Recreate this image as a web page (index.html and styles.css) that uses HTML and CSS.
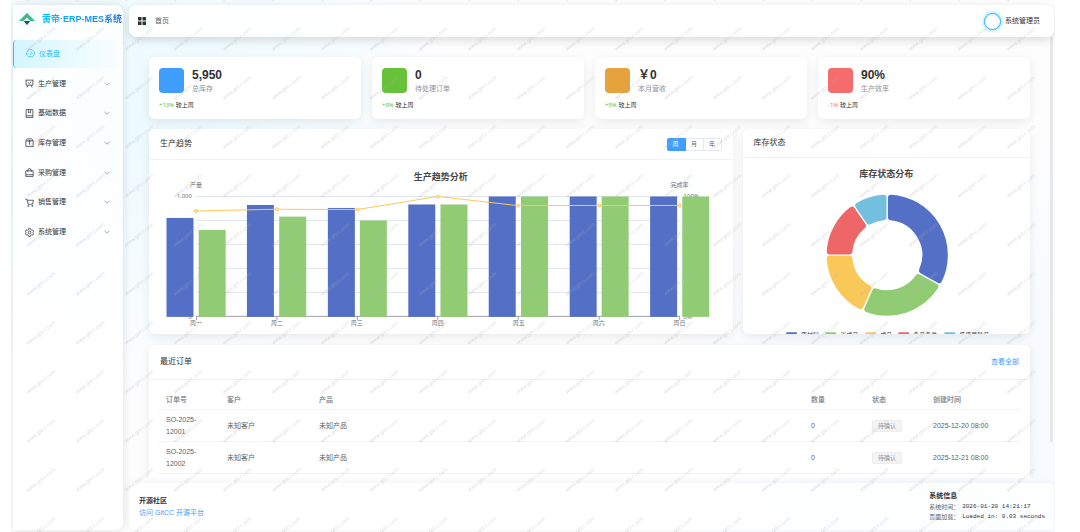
FILE: index.html
```html
<!DOCTYPE html>
<html lang="zh-CN">
<head>
  <meta charset="UTF-8">
  <meta name="viewport" content="width=device-width, initial-scale=1.0">
  <title>黄帝·ERP-MES系统</title>
  <link rel="stylesheet" href="styles.css">
</head>
<body>
  <div class="app">
    <aside class="sidebar">
      <div class="logo">
        <svg class="logo-icon" viewBox="0 0 16 12">
          <path d="M8 0L16 8H11.5L8 4.5L4.5 8H0Z" fill="#41b883"/>
          <path d="M4.8 8H11.2L8 12Z" fill="#35495e"/>
        </svg>
        <span>黄帝·ERP-MES系统</span>
      </div>
      <nav class="menu">
        <a class="menu-item active" href="#">
          <svg class="icon" viewBox="0 0 16 16"><path d="M4.5 13.8A7 7 0 1 1 11.5 13.8ZM8 10.5L10 5.5M3.5 8H4.5M5 4.8L5.6 5.4M12.5 8H11.5M8 3.3V4.3"/></svg>
          <span>仪表盘</span>
        </a>
        <a class="menu-item" href="#">
          <svg class="icon" viewBox="0 0 16 16"><path d="M1 2H15M2 2V11H14V2M5 11L3.5 15M11 11L12.5 15M5 6L7.5 8L11 5"/></svg>
          <span>生产管理</span>
          <svg class="arrow" viewBox="0 0 10 10"><path d="M1 3L5 7L9 3"/></svg>
        </a>
        <a class="menu-item" href="#">
          <svg class="icon" viewBox="0 0 16 16"><path d="M2 1H14V15H2ZM2 12H14M6 1V7L8 5.5L10 7V1"/></svg>
          <span>基础数据</span>
          <svg class="arrow" viewBox="0 0 10 10"><path d="M1 3L5 7L9 3"/></svg>
        </a>
        <a class="menu-item" href="#">
          <svg class="icon" viewBox="0 0 16 16"><path d="M1.5 5H14.5V15H1.5ZM1.5 5L4 1.5H12L14.5 5M8 12V4M5.5 6.5L8 4L10.5 6.5"/></svg>
          <span>库存管理</span>
          <svg class="arrow" viewBox="0 0 10 10"><path d="M1 3L5 7L9 3"/></svg>
        </a>
        <a class="menu-item" href="#">
          <svg class="icon" viewBox="0 0 16 16"><path d="M1.5 5H14.5V15H1.5ZM1.5 12H14.5M5 7V4A3 3 0 0 1 11 4V7"/></svg>
          <span>采购管理</span>
          <svg class="arrow" viewBox="0 0 10 10"><path d="M1 3L5 7L9 3"/></svg>
        </a>
        <a class="menu-item" href="#">
          <svg class="icon" viewBox="0 0 16 16"><path d="M0.5 2H3.5L5.5 11H13.5L15 4H4"/><circle cx="6" cy="14" r="1"/><circle cx="13" cy="14" r="1"/></svg>
          <span>销售管理</span>
          <svg class="arrow" viewBox="0 0 10 10"><path d="M1 3L5 7L9 3"/></svg>
        </a>
        <a class="menu-item" href="#">
          <svg class="icon" viewBox="0 0 16 16"><path d="M6.5 1H9.5L10 3L12 4L14 3.5L15.3 6L14 8L15.3 10L14 12.5L12 12L10 13L9.5 15H6.5L6 13L4 12L2 12.5L0.7 10L2 8L0.7 6L2 3.5L4 4L6 3Z"/><circle cx="8" cy="8" r="2.5"/></svg>
          <span>系统管理</span>
          <svg class="arrow" viewBox="0 0 10 10"><path d="M1 3L5 7L9 3"/></svg>
        </a>
      </nav>
    </aside>

    <div class="main">
      <header class="topbar">
        <svg class="grid-icon" viewBox="0 0 8 8"><path d="M0 0H3.5V3.5H0ZM4.5 0H8V3.5H4.5ZM0 4.5H3.5V8H0ZM4.5 4.5H8V8H4.5Z"/></svg>
        <span class="crumb">首页</span>
        <div class="user">
          <span class="avatar"></span>
          <span>系统管理员</span>
        </div>
      </header>

      <main class="content">
        <section class="stats">
          <div class="card stat">
            <div class="stat-top">
              <span class="stat-icon blue"></span>
              <div><div class="stat-value">5,950</div><div class="stat-label">总库存</div></div>
            </div>
            <div class="stat-change"><span class="up">+13%</span> 较上周</div>
          </div>
          <div class="card stat">
            <div class="stat-top">
              <span class="stat-icon green"></span>
              <div><div class="stat-value">0</div><div class="stat-label">待处理订单</div></div>
            </div>
            <div class="stat-change"><span class="up">+9%</span> 较上周</div>
          </div>
          <div class="card stat">
            <div class="stat-top">
              <span class="stat-icon orange"></span>
              <div><div class="stat-value">￥0</div><div class="stat-label">本月营收</div></div>
            </div>
            <div class="stat-change"><span class="up">+5%</span> 较上周</div>
          </div>
          <div class="card stat">
            <div class="stat-top">
              <span class="stat-icon red"></span>
              <div><div class="stat-value">90%</div><div class="stat-label">生产效率</div></div>
            </div>
            <div class="stat-change"><span class="down">-1%</span> 较上周</div>
          </div>
        </section>

        <section class="charts">
          <div class="card">
            <div class="card-header trend-header">
              <span>生产趋势</span>
              <div class="range">
                <button type="button" class="on">周</button>
                <button type="button">月</button>
                <button type="button">年</button>
              </div>
            </div>
            <svg class="chart" viewBox="0 0 584 174">
              <text class="chart-title" x="292" y="20">生产趋势分析</text>
              <g class="axis-text">
                <text x="47" y="27">产量</text>
                <text x="531" y="27">完成率</text>
                <g class="end">
                  <text x="43" y="38">1,000</text>
                  <text x="43" y="62">800</text>
                  <text x="43" y="86">600</text>
                  <text x="43" y="110">400</text>
                  <text x="43" y="134">200</text>
                  <text x="43" y="159">0</text>
                </g>
                <g class="start">
                  <text x="535" y="38">100%</text>
                  <text x="535" y="62">80%</text>
                  <text x="535" y="86">60%</text>
                  <text x="535" y="110">40%</text>
                  <text x="535" y="134">20%</text>
                  <text x="535" y="159">0%</text>
                </g>
                <text x="47" y="165">周一</text>
                <text x="128" y="165">周二</text>
                <text x="208" y="165">周三</text>
                <text x="289" y="165">周四</text>
                <text x="370" y="165">周五</text>
                <text x="450" y="165">周六</text>
                <text x="531" y="165">周日</text>
              </g>
              <path class="grid-line" d="M47 36.5H531M47 60.5H531M47 84.5H531M47 108.5H531M47 132.5H531"/>
              <path class="axis-line" d="M47 156.5H531M47.5 156V160M128 156V160M208.5 156V160M289 156V160M369.5 156V160M450.5 156V160M531 156V160"/>
              <g fill="#5470c6">
                <rect x="17.5" y="58" width="27" height="99"/>
                <rect x="98" y="45" width="27" height="112"/>
                <rect x="179" y="48" width="27" height="109"/>
                <rect x="259.5" y="44.5" width="27" height="112.5"/>
                <rect x="340" y="36.5" width="27" height="120.5"/>
                <rect x="421" y="36.5" width="27" height="120.5"/>
                <rect x="501.5" y="36.5" width="27" height="120.5"/>
              </g>
              <g fill="#91cc75">
                <rect x="49.7" y="70" width="27" height="87"/>
                <rect x="130.3" y="56.7" width="27" height="100.3"/>
                <rect x="211" y="60.5" width="27" height="96.5"/>
                <rect x="291.7" y="44.5" width="27" height="112.5"/>
                <rect x="372.3" y="36.5" width="27" height="120.5"/>
                <rect x="453" y="36.5" width="27" height="120.5"/>
                <rect x="533.7" y="36.5" width="27" height="120.5"/>
              </g>
              <g class="rate">
                <polyline points="47,51 128,49.3 208.5,49.6 289,36.5 369.5,45.7 450.5,45.5 531,45.5"/>
                <circle cx="47" cy="51" r="1.5"/>
                <circle cx="128" cy="49.3" r="1.5"/>
                <circle cx="208.5" cy="49.6" r="1.5"/>
                <circle cx="289" cy="36.5" r="1.5"/>
                <circle cx="369.5" cy="45.7" r="1.5"/>
                <circle cx="450.5" cy="45.5" r="1.5"/>
                <circle cx="531" cy="45.5" r="1.5"/>
              </g>
            </svg>
          </div>

          <div class="card stock">
            <div class="card-header">库存状态</div>
            <svg class="chart" viewBox="0 0 287 190">
              <text class="chart-title" x="143" y="19">库存状态分布</text>
              <g class="donut">
                <path fill="#5470c6" stroke="#5470c6" d="M147.7 39.6A57.5 57.5 0 0 1 195.8 122L178.7 112.4A38 38 0 0 0 147.7 59.2Z"/>
                <path fill="#91cc75" stroke="#91cc75" d="M192.1 128.5A57.5 57.5 0 0 1 124.1 150.9L132 133.1A38 38 0 0 0 175.1 118.9Z"/>
                <path fill="#fac858" stroke="#fac858" d="M117.3 147.9A57.5 57.5 0 0 1 86.6 100.7H106.2A38 38 0 0 0 125.2 130Z"/>
                <path fill="#ee6666" stroke="#ee6666" d="M86.6 93.3A57.5 57.5 0 0 1 108.8 51.5L119.8 67.7A38 38 0 0 0 106.2 93.3Z"/>
                <path fill="#73c0de" stroke="#73c0de" d="M115 47.4A57.5 57.5 0 0 1 140.3 39.6V59.2A38 38 0 0 0 125.9 63.6Z"/>
              </g>
              <rect x="43" y="174" width="11" height="6" rx="1" fill="#5470c6"/>
              <rect x="82" y="174" width="11" height="6" rx="1" fill="#91cc75"/>
              <rect x="122" y="174" width="11" height="6" rx="1" fill="#fac858"/>
              <rect x="155" y="174" width="11" height="6" rx="1" fill="#ee6666"/>
              <rect x="201" y="174" width="11" height="6" rx="1" fill="#73c0de"/>
              <g class="legend-text">
                <text x="58" y="179">原材料</text>
                <text x="97" y="179">半成品</text>
                <text x="137" y="179">成品</text>
                <text x="170" y="179">备品备件</text>
                <text x="216" y="179">低值易耗品</text>
              </g>
            </svg>
          </div>
        </section>

        <section class="card orders">
          <div class="card-header">
            <span>最近订单</span>
            <a href="#">查看全部</a>
          </div>
          <table>
            <colgroup>
              <col class="c-sm"><col class="c-md"><col><col class="c-sm"><col class="c-sm"><col class="c-lg">
            </colgroup>
            <thead>
              <tr><th>订单号</th><th>客户</th><th>产品</th><th>数量</th><th>状态</th><th>创建时间</th></tr>
            </thead>
            <tbody>
              <tr><td>SO-2025-12001</td><td>未知客户</td><td>未知产品</td><td>0</td><td><span class="tag">待确认</span></td><td>2025-12-20 08:00</td></tr>
              <tr><td>SO-2025-12002</td><td>未知客户</td><td>未知产品</td><td>0</td><td><span class="tag">待确认</span></td><td>2025-12-21 08:00</td></tr>
            </tbody>
          </table>
        </section>
        <div class="scrollbar"></div>
      </main>

      <footer class="footer">
        <div>
          <h4>开源社区</h4>
          <a href="#">访问 GitCC 开源平台</a>
        </div>
        <div class="sys">
          <h4>系统信息</h4>
          <dl>
            <dt>系统时间：</dt><dd>2026-01-20 14:21:17</dd>
            <dt>页面加载：</dt><dd>Loaded in: 0.03 seconds</dd>
          </dl>
        </div>
      </footer>
    </div>

    <svg class="watermark">
      <defs>
        <pattern id="wm" width="49" height="49" patternUnits="userSpaceOnUse" patternTransform="translate(14 4)">
          <text x="0" y="0" transform="translate(3 47) rotate(-38)">www.gitcc.com</text>
        </pattern>
      </defs>
      <rect width="100%" height="100%" fill="url(#wm)"/>
    </svg>
  </div>
</body>
</html>
```
FILE: styles.css
```css
* { box-sizing: border-box; }
body {
  margin: 0;
  background: #fff;
  color: #303133;
  font: 7px/12px "Liberation Sans", "Noto Sans CJK SC", sans-serif;
}
a { color: #409eff; text-decoration: none; }
h4 { margin: 0; font-size: 7px; line-height: 12px; }

.app {
  position: relative;
  display: flex;
  gap: 6px;
  height: 100vh;
  margin: 0 25px 0 11px;
  padding: 5px 1px 2px 2px;
  overflow: hidden;
  background:
    radial-gradient(circle at 14% 20%, rgba(0, 210, 255, 0.07), transparent 30%),
    radial-gradient(circle at 90% 78%, rgba(64, 158, 255, 0.05), transparent 28%),
    #fdfdfe;
}

/* sidebar */
.sidebar {
  flex: none;
  width: 110px;
  overflow: hidden;
  border-radius: 0 8px 8px 0;
  background: rgba(255, 255, 255, 0.75);
  box-shadow: 0 0 10px rgba(0, 0, 0, 0.12);
}
.logo {
  display: flex;
  align-items: center;
  gap: 7px;
  height: 28px;
  padding-left: 6px;
  white-space: nowrap;
  font-size: 9px;
  font-weight: bold;
}
.logo-icon {
  flex: none;
  width: 16px;
  height: 12px;
  filter: drop-shadow(0 0 3px rgba(0, 210, 255, 0.3));
}
.logo span {
  background: linear-gradient(90deg, #00c6ff, #2b6fd6);
  -webkit-background-clip: text;
  background-clip: text;
  color: transparent;
}
.menu {
  display: grid;
  grid-auto-rows: 1fr;
  gap: 2px;
  height: 206px;
  margin-top: 7px;
}
.menu-item {
  display: flex;
  align-items: center;
  gap: 4px;
  padding: 0 13px 0 11px;
  border-left: 1px solid transparent;
  border-radius: 4px;
  color: #303133;
}
.menu-item.active {
  padding-left: 12px;
  border-color: #1cc8f8;
  background: linear-gradient(90deg, rgba(0, 200, 255, 0.16), rgba(0, 200, 255, 0));
  color: #1cc0f5;
}
.icon { width: 9px; height: 9px; fill: none; stroke: currentColor; stroke-width: 1.3; }
.arrow { width: 6px; height: 6px; margin-left: auto; fill: none; stroke: #909399; stroke-width: 1.3; }

/* main column */
.main {
  flex: 1;
  display: flex;
  flex-direction: column;
  min-width: 0;
}
.topbar {
  position: relative;
  z-index: 1;
  flex: none;
  display: flex;
  align-items: center;
  height: 32px;
  padding: 0 14px 0 9px;
  border-radius: 8px;
  background: rgba(255, 255, 255, 0.9);
  box-shadow: 0 3px 10px rgba(0, 0, 0, 0.14);
}
.grid-icon { width: 8px; height: 8px; fill: #303133; }
.crumb { margin-left: 9px; color: #606266; }
.user { display: flex; align-items: center; gap: 4px; margin-left: auto; }
.avatar {
  width: 17px;
  height: 17px;
  border: 1px solid #35a8f5;
  border-radius: 50%;
  background: #fff;
  box-shadow: 0 0 4px rgba(0, 198, 255, 0.6);
}
.content {
  position: relative;
  flex: 1;
  min-height: 0;
  overflow: hidden;
  padding: 20px 24px 0 20px;
}
.scrollbar {
  position: absolute;
  top: 0;
  right: 1px;
  width: 3px;
  height: 405px;
  border-radius: 1px;
  background: #e6e7e9;
}

/* cards */
.card {
  overflow: hidden;
  border-radius: 6px;
  background: #fff;
  box-shadow: 0 3px 10px rgba(0, 0, 0, 0.08);
}
.card-header {
  display: flex;
  align-items: center;
  justify-content: space-between;
  height: 29px;
  padding: 0 11px;
  border-bottom: 1px solid #f0f1f3;
  font-size: 8px;
}
.trend-header { height: 31px; }
.stats { display: grid; grid-template-columns: repeat(4, 1fr); gap: 11px; }
.stat { height: 62px; padding: 11px 10px; }
.stat-top { display: flex; gap: 8px; height: 25px; }
.stat-icon { width: 25px; height: 25px; border-radius: 4px; }
.blue { background: #409eff; }
.green { background: #67c23a; }
.orange { background: #e6a23c; }
.red { background: #f56c6c; }
.stat-value { font-size: 12px; line-height: 15px; font-weight: bold; }
.stat-label { color: #909399; }
.stat-change {
  margin-top: 6px;
  font-family: "Noto Sans", "Noto Sans CJK SC", sans-serif;
  font-size: 6px;
}
.up { color: #67c23a; }
.down { color: #f56c6c; }

/* charts */
.charts { display: grid; grid-template-columns: 67fr 33fr; gap: 10px; margin: 10px 0 11px; }
.stock { height: 0; min-height: 100%; }
.chart { display: block; width: 100%; }
.chart text { text-anchor: middle; }
.chart .chart-title { font-size: 9px; font-weight: bold; fill: #464646; }
.axis-text { font-family: "Noto Sans", "Noto Sans CJK SC", sans-serif; font-size: 6px; fill: #6e7079; }
.chart .end text { text-anchor: end; }
.chart .start text, .chart .legend-text text { text-anchor: start; }
.legend-text { font-size: 6px; fill: #333; }
.grid-line { stroke: #e0e6f1; }
.axis-line { stroke: #a0a2a8; }
.rate polyline { fill: none; stroke: #fac858; }
.rate circle { fill: #fde9bb; stroke: #fac858; }
.donut path { stroke-width: 6; stroke-linejoin: round; }
.range { display: flex; }
.range button {
  width: 18px;
  height: 13px;
  padding: 0;
  border: 1px solid #e4e7ed;
  border-left: 0;
  background: #fff;
  color: #606266;
  font: inherit;
  font-size: 6px;
  line-height: 10px;
}
.range button:last-child { border-radius: 0 2px 2px 0; }
.range .on {
  width: 19px;
  border-color: #409eff;
  border-radius: 2px 0 0 2px;
  background: #409eff;
  color: #fff;
}

/* orders */
.orders { padding-bottom: 20px; }
.orders .card-header { height: 35px; }
.orders .card-header a { font-size: 7px; }
table {
  width: calc(100% - 20px);
  margin: 10px 10px 0;
  border-collapse: collapse;
  table-layout: fixed;
}
.c-sm { width: 61px; }
.c-md { width: 92px; }
.c-lg { width: 94px; }
th, td {
  padding: 4px 7px 3px;
  border-bottom: 1px solid #f0f2f6;
  text-align: left;
  color: #606266;
}
th { color: #909399; }
.tag {
  display: inline-block;
  padding: 0 5px;
  border: 1px solid #ededef;
  border-radius: 2px;
  background: #f4f4f5;
  color: #909399;
  font-size: 6px;
  line-height: 10px;
}

.footer {
  flex: none;
  display: flex;
  justify-content: space-between;
  height: 47px;
  margin-top: 5px;
  padding: 7px 9px 0 10px;
  border-radius: 6px;
  background: rgba(255, 255, 255, 0.7);
  box-shadow: 0 0 8px rgba(0, 0, 0, 0.05);
}
.footer > div:first-child { padding-top: 5px; }
dl {
  display: grid;
  grid-template-columns: 33px auto;
  margin: 0;
  font-size: 6px;
  line-height: 10px;
  color: #606266;
}
dd { margin: 0; font-family: "Liberation Mono", monospace; color: #303133; }

.watermark {
  position: absolute;
  inset: 0;
  z-index: 2;
  width: 100%;
  height: 100%;
  pointer-events: none;
}
.watermark text { font: 5px "Noto Sans", sans-serif; fill: rgba(175, 175, 175, 0.42); }
```
